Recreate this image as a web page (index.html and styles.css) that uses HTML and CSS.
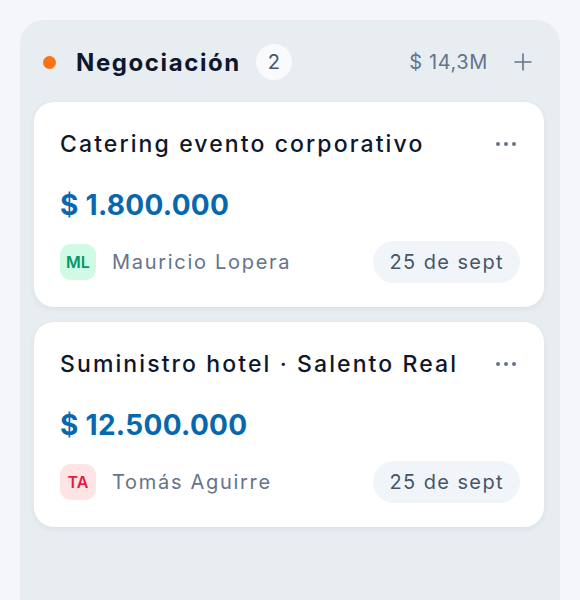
FILE: index.html
```html
<!DOCTYPE html>
<html lang="es">

<head>
    <meta charset="UTF-8">
    <meta name="viewport" content="width=device-width, initial-scale=1.0">
    <title>Negociación</title>

    <link rel="stylesheet" href="styles.css">
</head>

<body>
    <div class="column">
        <div class="col-head">
            <span class="dot"></span>
            <h2 class="col-title">Negociación</h2>
            <span class="count">2</span>
            <span class="col-total">$ 14,3M</span>
            <button class="add-btn" aria-label="Agregar">
                <svg width="18" height="18" viewBox="0 0 18 18">
                    <path d="M9 1v16M1 9h16" stroke="#64748b" stroke-width="1.6" stroke-linecap="round" />
                </svg>
            </button>
        </div>

        <div class="cards">
            <div class="deal">
                <div class="deal-top">
                    <h3 class="deal-title">Catering evento corporativo</h3>
                    <span class="more"><i></i><i></i><i></i></span>
                </div>
                <div class="deal-amount">$ 1.800.000</div>
                <div class="deal-foot">
                    <div class="owner">
                        <span class="avatar green">ML</span>
                        <span class="owner-name">Mauricio Lopera</span>
                    </div>
                    <span class="date">25 de sept</span>
                </div>
            </div>

            <div class="deal">
                <div class="deal-top">
                    <h3 class="deal-title">Suministro hotel · Salento Real</h3>
                    <span class="more"><i></i><i></i><i></i></span>
                </div>
                <div class="deal-amount">$ 12.500.000</div>
                <div class="deal-foot">
                    <div class="owner">
                        <span class="avatar rose">TA</span>
                        <span class="owner-name">Tomás Aguirre</span>
                    </div>
                    <span class="date">25 de sept</span>
                </div>
            </div>
        </div>
    </div>
</body>

</html>
```

FILE: styles.css
```css
* {
    margin: 0;
    padding: 0;
    box-sizing: border-box;
}

body {
    background-color: #f4f6f9;
    font-family: Inter, "Noto Sans", sans-serif;
    padding: 20px 20px 0 20px;
    height: 600px;
    overflow: hidden;
}

.column {
    background-color: #e8edf2;
    border-radius: 24px 24px 0 0;
    height: 580px;
    padding: 24px 16px 0 14px;
}

.col-head {
    display: flex;
    align-items: center;
    height: 36px;
    padding-left: 9px;
}

.dot {
    width: 13px;
    height: 13px;
    border-radius: 50%;
    background-color: #f97316;
}

.col-title {
    font-size: 24px;
    font-weight: 700;
    color: #0f172a;
    margin-left: 20px;
    letter-spacing: 1.6px;
}

.count {
    width: 36px;
    height: 36px;
    border-radius: 50%;
    background-color: #f8fafc;
    color: #475569;
    font-size: 20px;
    display: flex;
    align-items: center;
    justify-content: center;
    margin-left: 15px;
}

.col-total {
    margin-left: auto;
    font-size: 20px;
    color: #64748b;
    letter-spacing: 0.6px;
}

.add-btn {
    background: none;
    border: none;
    width: 18px;
    height: 18px;
    margin-left: 26px;
    margin-right: 12px;
    display: flex;
}

.cards {
    display: flex;
    flex-direction: column;
    gap: 15px;
    margin-top: 22px;
}

.deal {
    background-color: #fff;
    border-radius: 20px;
    padding: 28px 24px 24px 26px;
    box-shadow: 0 2px 6px rgba(15, 23, 42, 0.06);
    height: 205px;
}

.deal-top {
    display: flex;
    justify-content: space-between;
    align-items: center;
}

.deal-title {
    font-size: 23px;
    font-weight: 500;
    color: #0f172a;
    letter-spacing: 2.1px;
}

.more {
    display: flex;
    gap: 4px;
    margin-right: 4px;
}

.more i {
    width: 4px;
    height: 4px;
    border-radius: 50%;
    background-color: #64748b;
}

.deal-amount {
    font-size: 28px;
    font-weight: 700;
    color: #0868ad;
    margin-top: 30px;
    letter-spacing: 0.3px;
}

.deal-foot {
    display: flex;
    justify-content: space-between;
    align-items: center;
    margin-top: 19px;
}

.owner {
    display: flex;
    align-items: center;
    gap: 16px;
}

.avatar {
    width: 36px;
    height: 36px;
    border-radius: 11px;
    display: flex;
    align-items: center;
    justify-content: center;
    font-size: 16px;
    font-weight: 600;
}

.avatar.green {
    background-color: #d1fae5;
    color: #059669;
}

.avatar.rose {
    background-color: #ffe4e6;
    color: #e11d48;
}

.owner-name {
    font-size: 20px;
    color: #64748b;
    letter-spacing: 1.7px;
}

.date {
    background-color: #f1f5f9;
    color: #475569;
    font-size: 20px;
    letter-spacing: 1.4px;
    border-radius: 21px;
    padding: 9px 16px;
}
```
